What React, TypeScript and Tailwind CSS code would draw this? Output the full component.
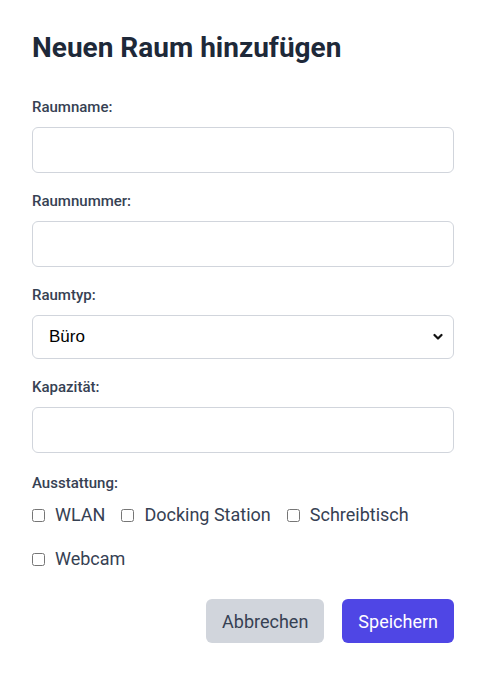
import { useState } from 'react';

const FEATURES = ['WLAN', 'Docking Station', 'Schreibtisch', 'Webcam'];

function Field({ label, children, gap = 'mb-4' }: { label: string; children: React.ReactNode; gap?: string }) {
  return (
    <div className={gap}>
      <label className="mb-2 block text-[15px] font-medium leading-6 text-gray-700">{label}</label>
      {children}
    </div>
  );
}

const inputCls =
  'block h-[46px] w-full rounded-md border border-gray-300 bg-white px-4 text-[18px] text-gray-800 outline-none focus:border-indigo-500';

export default function App() {
  const [type, setType] = useState('Büro');
  const [checked, setChecked] = useState<Record<string, boolean>>({});

  return (
    <div className="min-h-[675px] w-[488px] bg-white font-['Roboto',sans-serif]">
      <div className="w-[486px] px-8 pb-8 pt-8">
        <h2 className="mb-[31px] text-[28px] font-bold leading-8 text-gray-800">Neuen Raum hinzufügen</h2>

        <form onSubmit={(e) => e.preventDefault()}>
          <Field label="Raumname:">
            <input type="text" className={inputCls} />
          </Field>
          <Field label="Raumnummer:">
            <input type="text" className={inputCls} />
          </Field>
          <Field label="Raumtyp:">
            <div className="relative">
              <select
                value={type}
                onChange={(e) => setType(e.target.value)}
                className="block h-[44px] w-full appearance-none rounded-md border border-gray-300 bg-white px-4 font-['Liberation_Sans',Arial,sans-serif] text-[17px] text-black outline-none"
              >
                <option>Büro</option>
                <option>Besprechungsraum</option>
                <option>Labor</option>
              </select>
              <svg
                className="pointer-events-none absolute right-[11px] top-[18px] h-[8px] w-[10px]"
                viewBox="0 0 10 8"
                fill="none"
                stroke="#111"
                strokeWidth="2.2"
                strokeLinecap="round"
                strokeLinejoin="round"
              >
                <path d="M1.5 2l3.5 3.5L8.5 2" />
              </svg>
            </div>
          </Field>
          <Field label="Kapazität:" gap="mb-[18px]">
            <input type="number" className={inputCls} />
          </Field>

          <div>
            <label className="mb-2 block text-[15px] font-medium leading-6 text-gray-700">Ausstattung:</label>
            <div className="flex flex-wrap gap-x-4 gap-y-5">
              {FEATURES.map((f) => (
                <label key={f} className="flex items-center gap-[10px] text-[18px] leading-6 text-gray-700">
                  <input
                    type="checkbox"
                    className="h-[13px] w-[13px]"
                    checked={!!checked[f]}
                    onChange={() => setChecked((c) => ({ ...c, [f]: !c[f] }))}
                  />
                  <span>{f}</span>
                </label>
              ))}
            </div>
          </div>

          <div className="mt-[28px] flex justify-end gap-[18px]">
            <button
              type="button"
              className="h-[44px] rounded-md bg-gray-300 px-4 text-[18px] text-gray-700"
            >
              Abbrechen
            </button>
            <button
              type="submit"
              className="h-[44px] rounded-md bg-[#4f46e5] px-4 text-[18px] text-white"
            >
              Speichern
            </button>
          </div>
        </form>
      </div>
    </div>
  );
}
